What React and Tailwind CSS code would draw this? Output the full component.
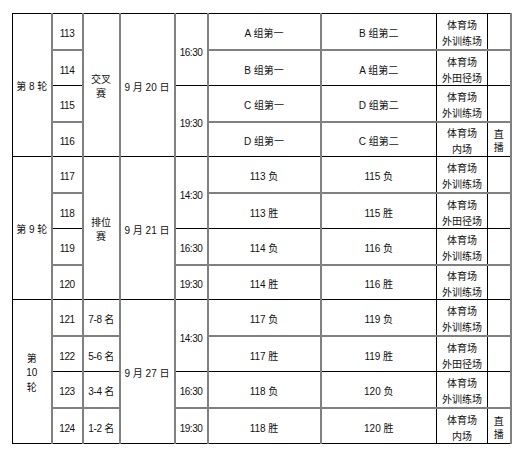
import React from "react";

const G = "border-b-2 border-b-[#808080]";
const K = "border-b border-b-black";

const rows = [
  // round 8
  { r: 0, num: "113", a: "A 组第一", b: "B 组第二", v: ["体育场", "外训练场"], n: "" },
  { r: 1, num: "114", a: "B 组第一", b: "A 组第二", v: ["体育场", "外田径场"], n: "" },
  { r: 2, num: "115", a: "C 组第一", b: "D 组第二", v: ["体育场", "外训练场"], n: "" },
  { r: 3, num: "116", a: "D 组第一", b: "C 组第二", v: ["体育场", "内场"], n: "直播" },
  // round 9
  { r: 0, num: "117", a: "113 负", b: "115 负", v: ["体育场", "外训练场"], n: "" },
  { r: 1, num: "118", a: "113 胜", b: "115 胜", v: ["体育场", "外田径场"], n: "" },
  { r: 2, num: "119", a: "114 负", b: "116 负", v: ["体育场", "外训练场"], n: "" },
  { r: 3, num: "120", a: "114 胜", b: "116 胜", v: ["体育场", "外训练场"], n: "" },
  // round 10
  { r: 0, num: "121", a: "117 负", b: "119 负", v: ["体育场", "外训练场"], n: "" },
  { r: 1, num: "122", a: "117 胜", b: "119 胜", v: ["体育场", "外田径场"], n: "" },
  { r: 2, num: "123", a: "118 负", b: "120 负", v: ["体育场", "外训练场"], n: "" },
  { r: 3, num: "124", a: "118 胜", b: "120 胜", v: ["体育场", "内场"], n: "直播" },
];

const rounds = [
  { label: ["第 8 轮"], type: ["交叉", "赛"], date: "9 月 20 日", times: [["16:30", 2], ["19:30", 2]] },
  { label: ["第 9 轮"], type: ["排位", "赛"], date: "9 月 21 日", times: [["14:30", 2], ["16:30", 1], ["19:30", 1]] },
  { label: ["第", "10", "轮"], type: null, places: ["7-8 名", "5-6 名", "3-4 名", "1-2 名"], date: "9 月 27 日", times: [["14:30", 2], ["16:30", 1], ["19:30", 1]] },
];

const vg = "border-r-2 border-r-[#808080]";
const vk = "border-r border-r-black";
const base = "text-center align-middle pb-0 px-0";

export default function App() {
  const body = [];
  rows.forEach((row, i) => {
    const ri = Math.floor(i / 4);
    const round = rounds[ri];
    const bottom = row.r % 2 === 0 ? G : K;
    const h = row.r === 3 && i !== 11 ? "h-[35px]" : "h-[36px]";
    const cells = [];
    if (row.r === 0) {
      cells.push(
        <td key="l" rowSpan={4} className={`${K} ${vg} border-l border-l-black ${base} pt-[4px] leading-[14.5px]`}>
          {round.label.map((t, j) => (
            <div key={j}>{t}</div>
          ))}
        </td>
      );
    }
    cells.push(
      <td key="n" className={`${bottom} ${vg} ${base} pt-[5px] tracking-[-0.4px]`}>
        {row.num}
      </td>
    );
    if (round.type) {
      if (row.r === 0) {
        cells.push(
          <td key="t" rowSpan={4} className={`${K} ${vg} ${base} pt-[4px] leading-[14px]`}>
            {round.type.map((t, j) => (
              <div key={j}>{t}</div>
            ))}
          </td>
        );
      }
    } else {
      cells.push(
        <td key="t" className={`${bottom} ${vg} ${base} pt-[5px] tracking-[-0.3px]`}>
          {round.places[row.r]}
        </td>
      );
    }
    if (row.r === 0) {
      cells.push(
        <td key="d" rowSpan={4} className={`${K} ${vg} ${base} pt-[4px]`}>
          {round.date}
        </td>
      );
    }
    let acc = 0;
    round.times.forEach(([t, span], j) => {
      if (acc === row.r) {
        const endRow = acc + span - 1;
        const b = endRow % 2 === 0 ? G : K;
        cells.push(
          <td key={"tm" + j} rowSpan={span} className={`${b} ${vg} ${base} pt-[5px] tracking-[-0.5px]`}>
            {t}
          </td>
        );
      }
      acc += span;
    });
    cells.push(
      <td key="a" className={`${bottom} ${vg} ${base} pt-[5px]`}>
        {row.a}
      </td>
    );
    cells.push(
      <td key="b" className={`${bottom} ${vk} ${base} pt-[5px]`}>
        {row.b}
      </td>
    );
    cells.push(
      <td key="v" className={`${bottom} ${vk} ${base} pt-0 leading-[16px]`}>
        <div className="translate-y-[3px]">
          {row.v.map((t, j) => (
            <div key={j}>{t}</div>
          ))}
        </div>
      </td>
    );
    cells.push(
      <td key="x" className={`${bottom} ${vg} ${base} pt-[4px] leading-[13px]`}>
        {row.n && (
          <>
            <div>{row.n[0]}</div>
            <div>{row.n[1]}</div>
          </>
        )}
      </td>
    );
    body.push(
      <tr key={i} className={h}>
        {cells}
      </tr>
    );
  });

  return (
    <div className="w-[519px] h-[454px] bg-white pt-[13px] pl-[12px] text-[10px] text-[#111] font-['Liberation_Sans','Noto_Sans_CJK_SC',sans-serif]">
      <table className="table-fixed border-collapse w-[498px] border-t border-t-black">
        <colgroup>
          <col className="w-[39px]" />
          <col className="w-[31px]" />
          <col className="w-[37px]" />
          <col className="w-[55px]" />
          <col className="w-[33px]" />
          <col className="w-[113px]" />
          <col className="w-[116px]" />
          <col className="w-[51px]" />
          <col className="w-[23px]" />
        </colgroup>
        <tbody>{body}</tbody>
      </table>
    </div>
  );
}
